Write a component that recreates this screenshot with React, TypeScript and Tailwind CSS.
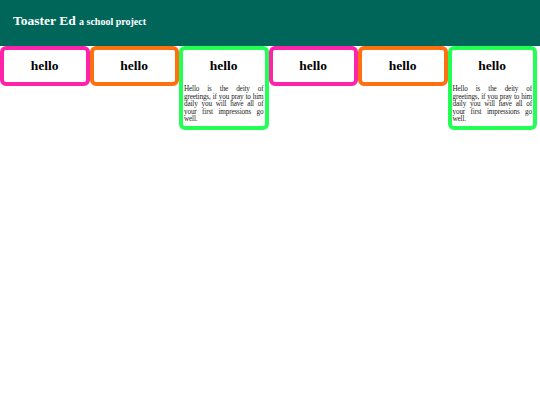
const CARDS: { border: string; text?: boolean }[] = [
  { border: 'border-[#ff22aa]' },
  { border: 'border-[#ff7010]' },
  { border: 'border-[#22ff55]', text: true },
  { border: 'border-[#ff22aa]' },
  { border: 'border-[#ff7010]' },
  { border: 'border-[#22ff55]', text: true },
]

function Card({ border, text }: { border: string; text?: boolean }) {
  return (
    <div className={`w-[89.5px] shrink-0 self-start rounded-[6px] border-4 bg-white px-[1px] ${border}`}>
      <h2 className="flex h-[32px] items-center justify-center text-[13.5px] font-bold text-black">hello</h2>
      {text && (
        <p className="mt-[4px] pb-[2px] text-justify text-[7.2px] leading-[7.5px] tracking-[-0.15px] text-[#222]">
          Hello is the deity of greetings, if you pray to him daily you will have all of your first impressions go well.
        </p>
      )}
    </div>
  )
}

export default function App() {
  return (
    <div className="min-h-[405px] bg-white font-['Liberation_Serif',serif]">
      <header className="flex h-[46px] items-center bg-[#00665a] px-[13px] pb-[4px] text-white">
        <h1 className="text-[13.5px] font-bold">
          Toaster Ed <span className="text-[10px]">a school project</span>
        </h1>
      </header>
      <div className="flex">
        {CARDS.map((c, i) => (
          <Card key={i} border={c.border} text={c.text} />
        ))}
      </div>
    </div>
  )
}
